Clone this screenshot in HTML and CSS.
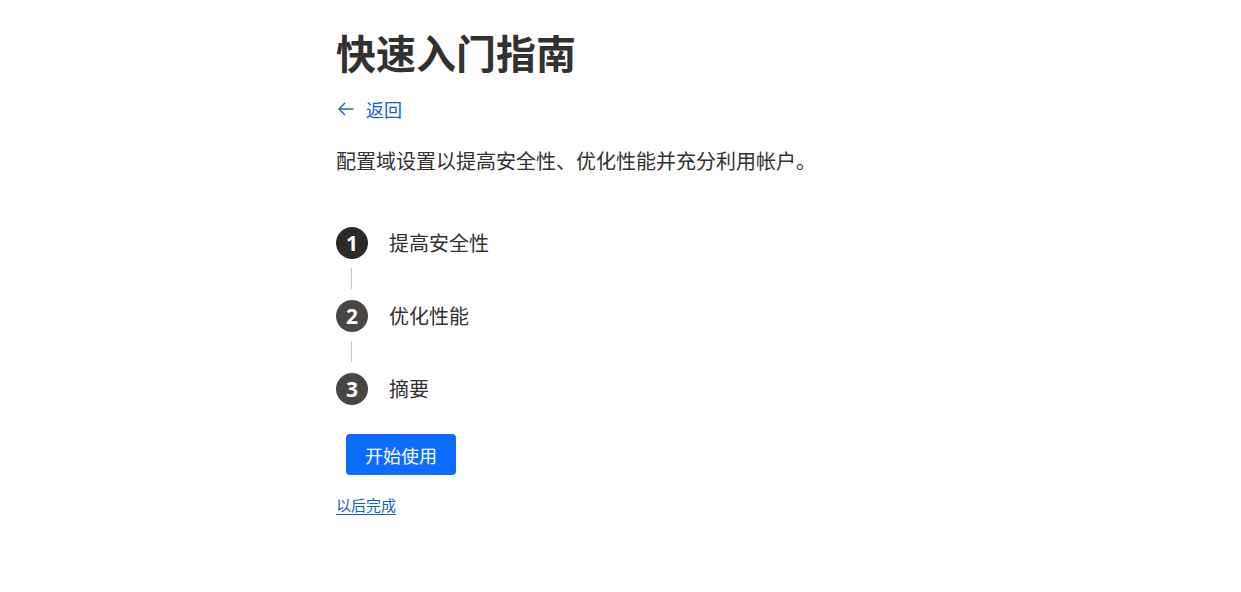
FILE: index.html
```html
<!DOCTYPE html>
<html lang="zh-CN">
<head>
    <meta charset="UTF-8">
    <meta name="viewport" content="width=device-width, initial-scale=1.0">
    <title>快速入门指南</title>
    <link rel="stylesheet" href="styles.css">
</head>
<body>

    <div class="page">
        <h1 class="title">快速入门指南</h1>

        <a class="back-link" href="#">
            <svg class="back-icon" width="18" height="16" viewBox="0 0 18 16" fill="none" stroke="currentColor" stroke-width="1.4">
                <path d="M16.5 8H2"/>
                <path d="M8 2L2 8l6 6"/>
            </svg>
            <span>返回</span>
        </a>

        <p class="desc">配置域设置以提高安全性、优化性能并充分利用帐户。</p>

        <div class="steps">
            <div class="step">
                <span class="step-num first">1</span>
                <span class="step-label">提高安全性</span>
            </div>
            <div class="connector"></div>
            <div class="step">
                <span class="step-num">2</span>
                <span class="step-label">优化性能</span>
            </div>
            <div class="connector"></div>
            <div class="step">
                <span class="step-num">3</span>
                <span class="step-label">摘要</span>
            </div>
        </div>

        <button class="start-btn">开始使用</button>

        <div class="later">
            <a class="later-link" href="#">以后完成</a>
        </div>
    </div>

</body>
</html>
```

FILE: styles.css
```css
body {
    margin: 0;
    background: #fff;
    color: #323130;
    font-family: "Noto Sans CJK SC", "Noto Sans", sans-serif;
}
.page {
    padding: 26px 0 0 336px;
}
.title {
    margin: 0;
    font-size: 40px;
    line-height: 52px;
    font-weight: 700;
    color: #323130;
}
.back-link {
    display: flex;
    align-items: center;
    gap: 11px;
    margin-top: 19px;
    font-size: 18px;
    line-height: 24px;
    color: #0f62c6;
    text-decoration: none;
}
.back-icon {
    margin-left: 1px;
}
.desc {
    margin: 26px 0 0;
    font-size: 20px;
    line-height: 28px;
}
.steps {
    margin-top: 52px;
}
.step {
    display: flex;
    align-items: center;
    gap: 21px;
    height: 32px;
}
.step-num {
    width: 32px;
    height: 32px;
    border-radius: 50%;
    background-color: #484644;
    color: #fff;
    display: flex;
    align-items: center;
    justify-content: center;
    font-family: "Open Sans", sans-serif;
    font-weight: 700;
    font-size: 21px;
}
.step-num.first {
    background-color: #2b2a29;
}
.step-label {
    font-size: 20px;
    line-height: 28px;
}
.connector {
    width: 1px;
    height: 21px;
    margin: 9px 0 11px 15px;
    background-color: #c8c6c4;
}
.start-btn {
    display: block;
    margin: 29px 0 0 10px;
    height: 41px;
    padding: 0 19px;
    border: none;
    border-radius: 4px;
    background-color: #0b6cff;
    color: #fff;
    font-family: inherit;
    font-size: 18px;
    cursor: pointer;
}
.later {
    margin-top: 19px;
    line-height: 20px;
}
.later-link {
    font-size: 15px;
    color: #0f62c6;
    text-decoration: underline;
    text-underline-offset: 3px;
}
```
